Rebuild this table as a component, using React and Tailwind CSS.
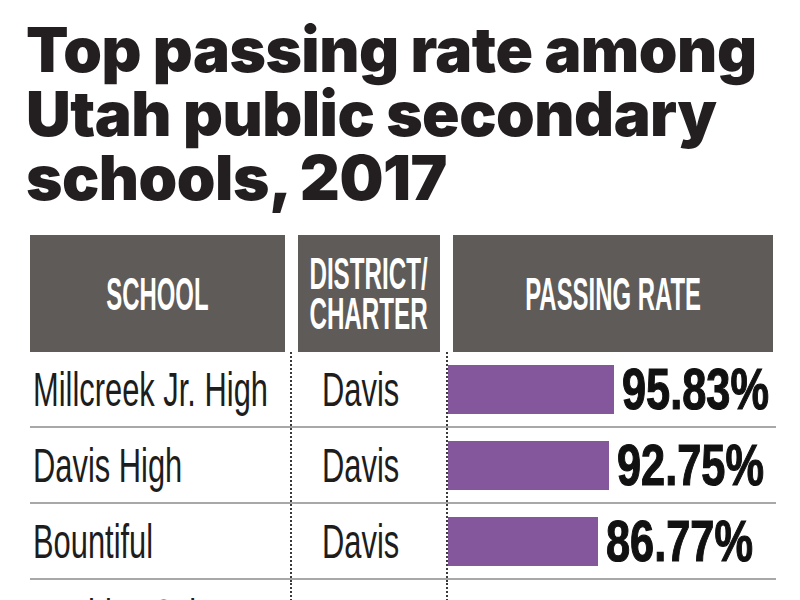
const rows = [
  { school: 'Millcreek Jr. High', district: 'Davis', rate: 95.83 },
  { school: 'Davis High', district: 'Davis', rate: 92.75 },
  { school: 'Bountiful', district: 'Davis', rate: 86.77 },
];

const sans = "[font-family:'Liberation_Sans',Arial,sans-serif]";

const HeaderCell = ({ width, children }) => (
  <div className={`flex ${width} shrink-0 items-center justify-center bg-[#5e5b59]`}>{children}</div>
);

const Row = ({ school, district, rate, tall }) => (
  <div className={`flex ${tall ? 'h-[140px]' : 'h-[76px] border-b-2 border-[#a8a8a8]'}`}>
    <div className={`flex w-[260px] shrink-0 pl-[3px] ${tall ? 'items-start pt-[12px]' : 'items-center'}`}>
      <span className={`block origin-left scale-x-[0.63] whitespace-nowrap text-[49px] leading-none text-[#1d1d1d] ${sans}`}>{school}</span>
    </div>
    <div className="flex w-[156px] shrink-0 items-center border-l-2 border-dotted border-[#3a3a3a] pl-[30px]">
      <span className={`block origin-left scale-x-[0.63] whitespace-nowrap text-[49px] leading-none text-[#1d1d1d] ${sans}`}>{district}</span>
    </div>
    <div className="flex min-w-0 flex-1 items-center gap-[8px] border-l-2 border-dotted border-[#3a3a3a]">
      {rate && (
        <>
          <div className="h-[49px] shrink-0 bg-[#84579d]" style={{ width: `${rate * 1.732}px` }} />
          <span className={`inline-block shrink-0 origin-left scale-x-[0.76] whitespace-nowrap text-[57px] font-bold leading-none text-[#111] [-webkit-text-stroke:1.2px_#111] ${sans}`}>
            {rate.toFixed(2)}%
          </span>
        </>
      )}
    </div>
  </div>
);

export default function App() {
  return (
    <div className="h-[600px] w-[800px] overflow-hidden bg-white">
      <h1 className="whitespace-nowrap pl-[26px] pt-[18px] text-[62px] font-black leading-[64px] tracking-[-0.5px] text-[#231f20] [font-family:Inter,Lato,sans-serif]">
        Top passing rate among
        <br />
        Utah public secondary
        <br />
        schools, 2017
      </h1>

      <div className={`ml-[30px] mt-[25px] flex h-[117px] w-[743px] gap-[13px] text-white ${sans}`}>
        <HeaderCell width="w-[255px]">
          <span className="inline-block scale-x-[0.52] text-[46px] font-bold leading-none">SCHOOL</span>
        </HeaderCell>
        <HeaderCell width="w-[142px]">
          <span className="inline-block scale-x-[0.55] text-center text-[44px] font-bold leading-[40px]">
            DISTRICT/
            <br />
            CHARTER
          </span>
        </HeaderCell>
        <HeaderCell width="w-[320px]">
          <span className="inline-block scale-x-[0.52] whitespace-nowrap text-[46px] font-bold leading-none">PASSING RATE</span>
        </HeaderCell>
      </div>

      <div className="ml-[30px] w-[746px]">
        {rows.map((r) => (
          <Row key={r.school} {...r} />
        ))}
        <Row school="Beehive Science" tall />
      </div>
    </div>
  );
}
